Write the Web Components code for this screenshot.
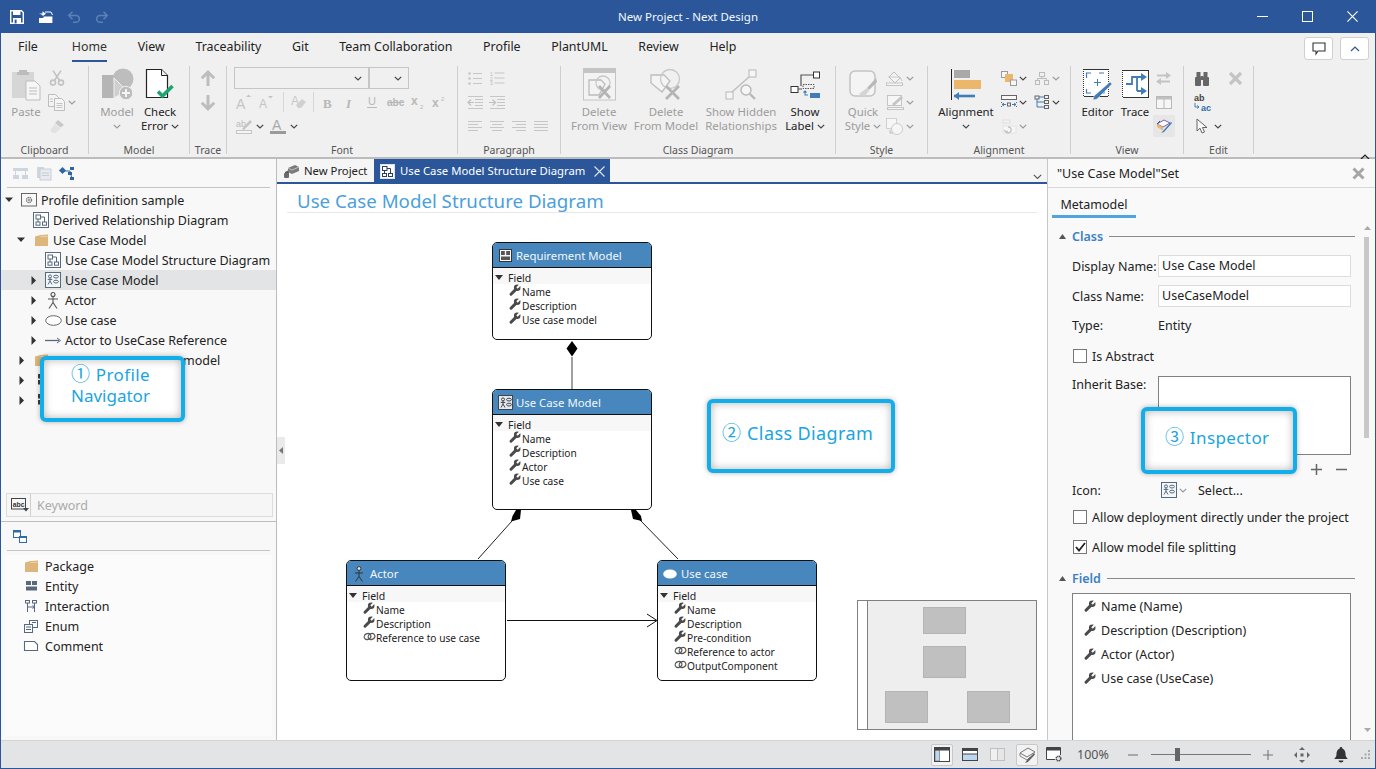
<!DOCTYPE html>
<html lang="en"><head><meta charset="utf-8"><title>New Project - Next Design</title>
<style>
html,body{margin:0;padding:0;background:#fff;overflow:hidden}
body{font:12.5px/1.2 "Noto Sans","Noto Sans CJK JP",sans-serif;color:#222;width:1376px;height:769px}
.num{font-family:"Noto Sans CJK JP",sans-serif;font-size:19px;letter-spacing:0;margin-right:1px}
</style>
<script>
const G='#bdbdbd',D='#56697f',B='#3f7cb8',K='#4a4a4a';
const svgT=(x,y,t,sz,c,extra='')=>`<text x="${x}" y="${y}" font-size="${sz}" fill="${c}" ${extra}>${t}</text>`;
const wrench=c=>`<path d="M2 10.2 6.6 5.6" stroke="${c}" stroke-width="3" stroke-linecap="round"/><circle cx="8.2" cy="3.8" r="3.3" fill="${c}"/><path d="M8 4 11.6.4" stroke="#fff" stroke-width="2"/>`;
const ucm=(bg,c)=>`<rect x=".5" y=".5" width="15" height="15" fill="${bg}" stroke="${c}"/><g fill="none" stroke="${c}"><circle cx="5" cy="4.4" r="1.5"/><path d="M5 6v3M2.7 7.4h4.6M5 9 3 12.5M5 9l2 3.5"/><ellipse cx="11" cy="4.6" rx="2.4" ry="1.4"/><ellipse cx="11" cy="9.6" rx="2.4" ry="1.4"/></g>`;
const diagram=`<rect x=".5" y=".5" width="15" height="15" fill="#fff" stroke="${D}"/><g fill="none" stroke="${D}"><rect x="3" y="3" width="4.5" height="4"/><rect x="3" y="10" width="4" height="3.2"/><rect x="9.5" y="10" width="4" height="3.2"/><path d="M7.5 5h4v5M5 7v3"/></g>`;
const folder=c=>`<path d="M0 2.5 5.5 1 13 .5V12H0z" fill="${c}"/><path d="M5.5 2.4h7" stroke="#ecd5ac"/>`;
const I={
save:[14,14,`<path d="M.7.7h10.8l1.8 1.8v10.8H.7z" fill="none" stroke="#fff" stroke-width="1.4"/><rect x="3" y="1" width="7.4" height="4" fill="#fff"/><rect x="3" y="8" width="8" height="5.4" fill="#fff"/><rect x="4.6" y="9.6" width="2" height="3.8" fill="#2b579a"/>`],
open:[15,14,`<path d="M1 8h4l1-1.5h8.4V13H1z" fill="#fff"/><path d="M8 3.5H4.5V1.2L1 3.8l3.5 2.5V5" fill="#fff" transform="matrix(-1 0 0 1 9 0)"/><path d="M7 2h6l1.500 3" fill="none" stroke="#fff"/>`],
undo:[14,12,`<path d="M2 4.5h7a3.4 3.4 0 0 1 0 6.8H6M5.5.8 1.8 4.5l3.7 3.7" fill="none" stroke="#5c80b8" stroke-width="1.6"/>`],
redo:[14,12,`<path d="M12 4.5H5a3.4 3.4 0 0 0 0 6.8h3M8.5.8l3.7 3.7-3.7 3.7" fill="none" stroke="#5c80b8" stroke-width="1.6"/>`],
min:[11,1,`<rect width="11" height="1" fill="#fff"/>`],
max:[11,11,`<rect x=".5" y=".5" width="10" height="10" fill="none" stroke="#fff"/>`],
close:[11,11,`<path d="M.4.4l10.2 10.2M10.6.4.4 10.6" stroke="#fff" stroke-width="1.1"/>`],
chev:[8,5,`<path d="M.8.8 4 4 7.2.8" fill="none" stroke="#444" stroke-width="1.2"/>`],
chevg:[8,5,`<path d="M.8.8 4 4 7.2.8" fill="none" stroke="#9a9a9a" stroke-width="1.2"/>`],
paste:[30,32,`<rect x="1" y="4" width="22" height="26" rx="1" fill="#d6d6d6"/><path d="M8 4V2h8v2h2v3H6V4z" fill="#bcbcbc"/><path d="M15 13h9l5 5v14H15z" fill="#f6f6f6" stroke="#bdbdbd"/><path d="M18 20h8M18 23h8M18 26h8" stroke="#bdbdbd"/>`],
cut:[16,16,`<g fill="none" stroke="#c2c2c2" stroke-width="1.6"><circle cx="4" cy="12.6" r="2.5"/><circle cx="12" cy="12.6" r="2.5"/><path d="M5.4 10.5 12 .6M10.6 10.5 4 .6"/></g>`],
copy:[18,17,`<path d="M.5.5h7l3 3v9H.5z" fill="#f3f3f3" stroke="#bdbdbd"/><path d="M6.5 4.5h7l3 3v9h-10z" fill="#f5f5f5" stroke="#bdbdbd"/><path d="M8.5 9.5h6M8.5 11.5h6M8.5 13.5h6M2 5h3M2 7.5h3" stroke="#c4c4c4"/>`],
brush:[16,14,`<path d="M9 1l6 5-3.5 2.5L6 4z" fill="#c8c8c8"/><path d="M6 5l5.5 4.5L7 14H3.6L1 11z" fill="#e2e2e2"/>`],
model:[33,32,`<path d="M1 7h12l6 6-6 17H1z" fill="#b5b5b5"/><circle cx="22" cy="11" r="10.5" fill="#bdbdbd"/><path d="M13 10l11 11-6 6-5 3z" fill="#cfcfcf" stroke="#f0f0f0"/><circle cx="25" cy="25" r="6.7" fill="#bcbcbc" stroke="#f0f0f0"/><path d="M25 21v8M21 25h8" stroke="#f4f4f4" stroke-width="2"/>`],
check:[31,32,`<path d="M1.5 1.5h15l6 6v22h-21z" fill="#fff" stroke="#222" stroke-width="1.2"/><path d="M16.5 1.5v6h6" fill="#f0f0f0" stroke="#222"/><path d="M13 23.5l4.5 4.5L27.5 18" fill="none" stroke="#1ba56f" stroke-width="3.6"/>`],
up:[16,17,`<path d="M8 16V2M1.8 8.2 8 2l6.2 6.2" fill="none" stroke="${G}" stroke-width="3"/>`],
down:[16,17,`<path d="M8 1v14M1.8 8.8 8 15l6.2-6.2" fill="none" stroke="${G}" stroke-width="3"/>`],
agrow:[18,16,svgT(1,15,'A',14,'#c4c4c4','font-family="Liberation Sans"')+`<path d="M11 3l2.5-2.5L16 3z" fill="#c4c4c4"/>`],
ashrink:[16,14,svgT(1,13,'A',12,'#c4c4c4','font-family="Liberation Sans"')+`<path d="M10 1h5l-2.5 2.5z" fill="#c4c4c4"/>`],
clear:[16,16,svgT(1,11,'A',12,'#c8c8c8','font-family="Liberation Sans"')+`<path d="M6 11l6-6 4 3-5 6H8z" fill="#d0d0d0"/>`],
bold:[12,13,svgT(1,11.5,'B',13,'#b8b8b8','font-family="Liberation Serif" font-weight="700"')],
ital:[12,13,svgT(2,11.5,'I',13,'#b8b8b8','font-family="Liberation Serif" font-style="italic" font-weight="700"')],
under:[12,14,svgT(2,10,'U',11,'#b8b8b8','font-family="Liberation Sans"')+`<rect x="1" y="12" width="10" height="1" fill="#b8b8b8"/>`],
strike:[17,12,svgT(0,10,'abc',10,'#b8b8b8','font-family="Liberation Sans" font-weight="700"')+`<rect x="0" y="6" width="17" height="1" fill="#b8b8b8"/>`],
sub:[14,14,svgT(0,10,'x',12,'#b8b8b8','font-family="Liberation Sans" font-weight="700"')+svgT(9,14,'2',6,'#b8b8b8','font-family="Liberation Sans"')],
sup:[14,14,svgT(0,12,'x',12,'#b8b8b8','font-family="Liberation Sans" font-weight="700"')+svgT(9,6,'2',6,'#b8b8b8','font-family="Liberation Sans"')],
hilite:[16,16,svgT(0,9,'ab',9,'#bbb','font-family="Liberation Sans"')+`<path d="M6 11 14 2l2 2-8 8z" fill="#c4c4c4"/><rect x=".5" y="12.5" width="15" height="3" fill="#f5f5f5" stroke="#c4c4c4"/>`],
acolor:[16,16,svgT(2,12,'A',14,'#aaa','font-family="Liberation Sans"')+`<rect y="13" width="16" height="3" fill="#9a9a9a"/>`],
bullets:[14,13,`<g fill="#c6c6c6"><circle cx="1.5" cy="1.5" r="1.3"/><circle cx="1.5" cy="6.5" r="1.3"/><circle cx="1.5" cy="11.5" r="1.3"/></g><path d="M5 1.5h9M5 6.5h9M5 11.5h9" stroke="#c6c6c6"/>`],
nums:[15,14,svgT(0,4.5,'1',5,'#bbb','font-family="Liberation Sans"')+svgT(0,9.5,'2',5,'#bbb','font-family="Liberation Sans"')+svgT(0,14,'3',5,'#bbb','font-family="Liberation Sans"')+`<path d="M4.5 2h10M4.5 7h10M4.5 12h10" stroke="#c6c6c6"/>`],
outdent:[16,13,`<path d="M1 .5h15M8 3.5h8M8 6.5h8M8 9.5h8M1 12.5h15" stroke="#c6c6c6"/><path d="M1 6.5h6M4 3.5l-3 3 3 3" fill="none" stroke="#c0c0c0" stroke-width="1.2"/>`],
indent:[16,13,`<path d="M1 .5h15M8 3.5h8M8 6.5h8M8 9.5h8M1 12.5h15" stroke="#c6c6c6"/><path d="M0 6.5h6M3.5 3.5l3 3-3 3" fill="none" stroke="#c0c0c0" stroke-width="1.2"/>`],
al:[14,10,`<path d="M0 .5h14M0 3.5h10M0 6.5h14M0 9.5h10" stroke="#c6c6c6"/>`],
ac:[14,10,`<path d="M0 .5h14M2 3.5h10M0 6.5h14M2 9.5h10" stroke="#c6c6c6"/>`],
ar:[14,10,`<path d="M0 .5h14M4 3.5h10M0 6.5h14M4 9.5h10" stroke="#c6c6c6"/>`],
aj:[14,10,`<path d="M0 .5h14M0 3.5h14M0 6.5h14M0 9.5h14" stroke="#c6c6c6"/>`],
delview:[33,33,`<rect x=".5" y="1" width="32" height="31" fill="#f3f3f3" stroke="#c4c4c4"/><rect x="0" y="0" width="33" height="5" fill="#c4c4c4"/><path d="M6 12h12l4 4-6 11H6z" fill="#f3f3f3" stroke="#bcbcbc" stroke-width="1.3"/><circle cx="20" cy="15" r="7" fill="none" stroke="#c8c8c8" stroke-width="1.3"/><path d="M16 18l11 12M27 18 16 30" stroke="#b4b4b4" stroke-width="2.6"/>`],
delmodel:[32,31,`<path d="M1 6h13l6 6-8 11-11-9z" fill="#f4f4f4" stroke="#bcbcbc" stroke-width="1.3"/><circle cx="20" cy="10" r="9.5" fill="none" stroke="#c8c8c8" stroke-width="1.3"/><path d="M16 17l13 13M29 17 16 30" stroke="#b4b4b4" stroke-width="2.8"/>`],
hidden:[32,31,`<rect x="24" y="1" width="7" height="7" fill="#f6f6f6" stroke="#b8b8b8"/><rect x="1" y="23" width="7" height="7" fill="#f6f6f6" stroke="#b8b8b8"/><path d="M7 23 24 8" stroke="#bcbcbc" stroke-width="1.3"/><circle cx="21" cy="21" r="5" fill="#f6f6f6" stroke="#b8b8b8" stroke-width="1.4"/><path d="M25 25l5 5" stroke="#b8b8b8" stroke-width="2.4"/>`],
label:[30,27,`<path d="M11 15V4h13" fill="none" stroke="#555" stroke-width="1.2"/><rect x="23.5" y="1" width="6" height="6" fill="#fff" stroke="#333"/><rect x="1" y="15.5" width="7" height="6" fill="#fff" stroke="#333"/><path d="M8 18h4" stroke="#555"/><rect x="13" y="13.5" width="11" height="4" fill="none" stroke="#555" stroke-dasharray="1.5 1"/><rect x="20" y="22" width="10" height="5" fill="${B}"/><path d="M15 20v4h3M13.5 21.5 15 20l1.500 1.500" fill="none" stroke="${B}" stroke-width="1.100"/>`],
qstyle:[29,29,`<rect x="1" y="1" width="25" height="25" rx="5" fill="#f4f4f4" stroke="#c2c2c2" stroke-width="1.5"/><path d="M27 8 18 18l2 2 8-8z" fill="#b8b8b8"/><path d="M18 18l2 3-5 6-5-3z" fill="#d4d4d4"/>`],
fill:[18,15,`<path d="M8 1l6 6-5 5-6-6z" fill="#f4f4f4" stroke="#bdbdbd"/><path d="M2 6h12l2 4" fill="none" stroke="#c8c8c8"/><rect x=".5" y="12" width="16" height="2.500" fill="#f5f5f5" stroke="#c4c4c4"/>`],
pen:[17,15,`<rect x=".5" y=".5" width="14" height="10" fill="#f6f6f6" stroke="#c4c4c4"/><path d="M5 9l9-8 2 2-9 8z" fill="#c4c4c4"/><rect x=".5" y="12.500" width="16" height="2" fill="#f5f5f5" stroke="#c4c4c4"/>`],
shape:[18,17,`<rect x=".5" y=".5" width="10" height="10" fill="#f6f6f6" stroke="#d0d0d0"/><circle cx="11" cy="11" r="5.500" fill="#f6f6f6" stroke="#ccc"/><path d="M4 12v3h3" fill="none" stroke="#bbb"/>`],
align:[31,31,`<rect x="0" y="0" width="1" height="31" fill="#222"/><rect x="3" y="1" width="16" height="8" fill="#a9a9a9"/><rect x="3" y="11" width="27" height="9" fill="#ecb76b"/><path d="M3 27h21" stroke="${B}" stroke-width="2.600"/><path d="M8 23l-5 4 5 4z" fill="${B}"/>`],
arr1:[16,15,`<rect x=".5" y=".5" width="6" height="6" fill="#f8f8f8" stroke="#999"/><rect x="4" y="3" width="8" height="8" fill="#ecb76b"/><rect x="9.500" y="9" width="6" height="5.500" fill="#f8f8f8" stroke="#999"/>`],
org:[14,13,`<rect x="4.500" y=".5" width="5" height="4" fill="none" stroke="#bbb"/><rect x=".5" y="8.500" width="4" height="4" fill="none" stroke="#bbb"/><rect x="9.500" y="8.500" width="4" height="4" fill="none" stroke="#bbb"/><path d="M7 4.500v2M2.500 8.500v-2h9v2" fill="none" stroke="#bbb"/>`],
arr2:[17,14,`<rect x=".5" y=".5" width="15" height="4" fill="#f8f8f8" stroke="#666"/><path d="M.5 7v1M.5 11v1M15.500 7v1M15.500 11v1" stroke="#666"/><rect x="6.500" y="8" width="3" height="3" fill="none" stroke="#666"/><path d="M1 9.500h4M11 9.500h4M3 8l-2 1.500L3 11M13 8l2 1.500L13 11" fill="none" stroke="${B}"/>`],
arr3:[16,14,`<rect x="1" y="1" width="4" height="3" fill="none" stroke="#666"/><rect x="10.500" y=".5" width="4" height="3" fill="none" stroke="#666"/><rect x="10.500" y="5.500" width="4" height="3" fill="none" stroke="#666"/><rect x="10.500" y="10.500" width="4" height="3" fill="none" stroke="#666"/><path d="M3 4v8h7M3 7h7M5 2h5" fill="none" stroke="${B}"/>`],
arr4:[15,15,`<rect x="1" y="1" width="7" height="3" fill="#f4f4f4" stroke="#dedede"/><rect x="1" y="7" width="13" height="7" fill="#f6f6f6" stroke="#e4e4e4"/><path d="M6 8a3 3 0 1 1-2 5M2 11l2 2 2-1" fill="none" stroke="#c2c2c2" stroke-width="1.300"/>`],
editor:[29,31,`<rect x=".5" y=".5" width="25" height="27" fill="#fff" stroke="#333"/><path d="M.5 1v27M25.500 1v27" stroke="#fff" stroke-dasharray="1 1"/><path d="M3.500 9V4H8M16 4h5M21 20v4h-4M3.500 20v4H8" fill="none" stroke="${B}" stroke-width="1.200"/><path d="M14.500 10v7M11 13.500h7" stroke="${B}"/><path d="M27 13l2 2-15 15-4 1 1-4z" fill="${B}" stroke="#f0f0f0" stroke-width=".5"/>`],
trace:[27,28,`<rect x=".5" y=".5" width="26" height="27" fill="#fff" stroke="#333"/><path d="M.5 1v27" stroke="#fff" stroke-dasharray="1 1"/><path d="M4 14h6V7h10M15 21V7M15 21h5" fill="none" stroke="${B}" stroke-width="1.800"/><path d="M19 3l6 4-6 4zM19 17l6 4-6 4z" fill="${B}"/>`],
swap:[16,13,`<path d="M1 3.500h10M14 9.500H4" stroke="#c4c4c4" stroke-width="2"/><path d="M10 0l5 3.500L10 7zM5 6 0 9.500 5 13z" fill="#c4c4c4"/>`],
table:[16,13,`<rect x=".5" y=".5" width="15" height="12" fill="#f6f6f6" stroke="#b8b8b8"/><rect x="1" y="1" width="14" height="2.500" fill="#c0c0c0"/><path d="M8 3v9" stroke="#b8b8b8"/>`],
pal:[16,16,`<path d="M1 6l7-4 6 3-7 4z" fill="#fff" stroke="#7a5ea8"/><path d="M1 9l6 3.500V9L1 6z" fill="#ecb76b"/><path d="M7 13l8-9 1 1-8 9-3 1z" fill="${B}"/><path d="M1 6l3-3" stroke="#2b579a"/>`],
binoc:[16,15,`<g fill="#666"><rect x="1" y="6" width="6" height="9" rx="1"/><rect x="9" y="6" width="6" height="9" rx="1"/><rect x="2.500" y="1" width="4" height="6"/><rect x="9.500" y="1" width="4" height="6"/><rect x="6.500" y="5" width="3" height="4"/></g>`],
xg:[15,15,`<path d="M2 2l11 11M13 2 2 13" stroke="#c4c4c4" stroke-width="3.200"/>`],
abac:[17,17,svgT(0,6.500,'ab',9,'#444','font-family="Liberation Sans" font-weight="700"')+svgT(7,16.500,'ac',9,'#2f6da8','font-family="Liberation Sans" font-weight="700"')+`<path d="M1 9v4h4M3.300 11.500 5 13 3.300 14.500" fill="none" stroke="${B}"/>`],
pointer:[12,16,`<path d="M1 1v12l3-2.800 2 4.800 2.500-1L6.500 9.500H11z" fill="#f8f8f8" stroke="#666"/>`],
comment:[14,13,`<path d="M1 1h12v8H6L4 12V9H1z" fill="none" stroke="#333" stroke-width="1.100"/>`],
collapse:[10,6,`<path d="M1 5l4-4 4 4" fill="none" stroke="#2b579a" stroke-width="1.200"/>`],
collapse2:[10,6,`<path d="M1 5l4-4 4 4" fill="none" stroke="#222" stroke-width="1.200"/>`],
tb1:[15,11,`<g fill="#cdd6e0"><rect width="15" height="3"/><rect y="7" width="6" height="4"/><rect x="9" y="7" width="6" height="4"/><rect x="2" y="3" width="1" height="4"/><rect x="12" y="3" width="1" height="4"/></g>`],
tb2:[14,13,`<rect x="0" y="0" width="7" height="11" fill="#cfd6de"/><rect x="3" y="2" width="11" height="11" fill="#e7eaee" stroke="#c8ced6"/><path d="M5 6h7M5 8.500h7" stroke="#c8ced6"/>`],
tb3:[15,13,`<g fill="#2f66a0"><rect x="0" y="1" width="5" height="5" transform="rotate(45 2.500 3.500)"/><rect x="8" y="5" width="4" height="3"/><rect x="10" y="0" width="4" height="3"/><rect x="10" y="10" width="4" height="3"/></g><path d="M3 4h7l2 8" fill="none" stroke="#2f66a0"/>`],
proj:[16,14,`<rect x=".5" y=".5" width="15" height="12.500" fill="#f8f8f8" stroke="#666"/><circle cx="8" cy="7" r="2.500" fill="none" stroke="#777" stroke-width="1.400" stroke-dasharray="1.400 .6"/><circle cx="8" cy="7" r=".9" fill="#777"/>`],
diagram:[16,16,diagram],
ucm:[16,16,ucm('#f4f6f8',D)],
folder:[13,12,folder('#dcb67a')],
actor:[14,17,`<g fill="none" stroke="#555" stroke-width="1.100"><circle cx="7" cy="2.500" r="2"/><path d="M7 4.500v6M2 7h10M7 10.500 3 16.500M7 10.500l4 6"/></g>`],
usecase:[17,11,`<ellipse cx="8.500" cy="5.500" rx="7.800" ry="4.800" fill="#fff" stroke="#666"/>`],
refarrow:[16,7,`<path d="M0 3.500h14" stroke="${D}" stroke-width="1.300"/><path d="M12 1l3.500 2.500L12 6" fill="none" stroke="${D}"/>`],
ent:[7,12,`<rect y="0" width="7" height="4.500" fill="#3c3c3c"/><rect y="6" width="7" height="4.500" fill="#3c3c3c"/>`],
abc:[18,14,`<rect x=".5" y=".5" width="14" height="10.500" fill="#f8f8f8" stroke="#444"/>`+svgT(1.800,8.500,'abc',6.800,'#333','font-family="Liberation Sans" font-weight="700"')+`<path d="M12 10h6l-3 3.500z" fill="#444"/>`],
pal0:[14,13,`<rect x=".5" y=".5" width="7" height="7" fill="#fff" stroke="#2f6da8"/><rect x="0" y="0" width="8" height="2.500" fill="#2f6da8"/><rect x="6.500" y="6.500" width="7" height="6" fill="#fff" stroke="#2f6da8"/><rect x="6" y="6" width="8" height="2" fill="#2f6da8"/>`],
pkg:[13,12,folder('#dcb67a')],
entity:[11,10,`<rect width="5" height="4" fill="${D}"/><rect x="6" width="5" height="4" fill="${D}"/><rect y="5.500" width="11" height="4" fill="${D}"/>`],
inter:[12,12,`<g fill="none" stroke="${D}"><rect x=".5" y=".5" width="4" height="2.500"/><rect x="7.500" y=".5" width="4" height="2.500"/><path d="M2.500 3v9M9.500 3v9M2.500 7h7M7.500 5.500l2 1.500-2 1.500"/></g>`],
enumi:[14,13,`<g fill="#fafafa" stroke="${D}"><rect x="5.500" y=".5" width="8" height="7"/><rect x=".5" y="4.500" width="8" height="8"/></g><path d="M2 7h5M2 9.500h5M8 2.500h4" stroke="${D}"/>`],
note:[14,10,`<path d="M.5.5h10l3 3v6H.5z" fill="#fff" stroke="${D}" stroke-width="1.100"/>`],
wrench:[12,12,wrench(K)],
link:[13,9,`<g fill="none" stroke="#555" stroke-width="1.200"><ellipse cx="4.500" cy="4.500" rx="3.400" ry="2.900" transform="rotate(-25 4.500 4.500)"/><ellipse cx="8.500" cy="4.500" rx="3.400" ry="2.900" transform="rotate(-25 8.500 4.500)"/></g>`],
hEntity:[13,13,`<rect x=".5" y=".5" width="12" height="12" fill="#f8f8f8" stroke="#333"/><rect x="2" y="2" width="3.800" height="4" fill="#555"/><rect x="7.200" y="2" width="3.800" height="4" fill="#555"/><rect x="2" y="7.500" width="9" height="3.500" fill="#555"/>`],
hUcm:[15,15,ucm('#e4e9ef','#444').replace('width="15" height="15"','width="14" height="14"')],
hActor:[12,16,`<g fill="none" stroke="#333" stroke-width="1"><circle cx="6" cy="2.500" r="1.900" fill="#e8e8e8"/><path d="M6 4.500v6M2 7h8M6 10.500l-3.500 5M6 10.500l3.500 5"/></g>`],
hUse:[14,10,`<ellipse cx="7" cy="5" rx="6.800" ry="4.500" fill="#fff"/>`],
sv1:[16,15,`<rect x=".5" y=".5" width="15" height="14" fill="#fff" stroke="#444"/><rect x="1" y="1" width="14" height="2.500" fill="#444"/><rect x="1" y="3.500" width="4.500" height="10.500" fill="#bcd7f2" stroke="#444" stroke-width=".5"/>`],
sv2:[16,13,`<rect x=".5" y=".5" width="15" height="12" fill="#fff" stroke="#444"/><rect x="1" y="1" width="14" height="2" fill="#444"/><rect x="1" y="6" width="14" height="6" fill="#bcd7f2"/><path d="M1 6h14" stroke="#444"/>`],
sv3:[15,13,`<rect x=".5" y=".5" width="14" height="12" fill="#f0f0f0" stroke="#c0c0c0"/><rect x="8" y="1" width="6" height="11" fill="#e6e6e6"/><path d="M7.500 1v11" stroke="#c0c0c0"/>`],
sv4:[17,17,`<path d="M1 7l8-5 7 4-8 5z" fill="#f4f4f4" stroke="#777"/><path d="M1 7v3l7 4 3-3" fill="none" stroke="#888"/><path d="M8 14l7-7 1 1.500L9 16l-3 1z" fill="#666"/>`],
sv5:[16,15,`<path d="M14.500 8V.5H.5v12H9" fill="#fff" stroke="#444"/><rect x="1" y="1" width="13" height="2.500" fill="#444"/><circle cx="12.500" cy="11.500" r="2.300" fill="none" stroke="#444" stroke-width="1.500" stroke-dasharray="1.200 .5"/>`],
move:[16,16,`<g fill="#666"><path d="M8 0l3 3H5zM8 16l-3-3h6zM0 8l3-3v6zM16 8l-3 3V5z"/><rect x="6.500" y="6.500" width="3" height="3"/></g>`],
bell:[14,16,`<path d="M7 0a1.300 1.300 0 0 1 1.300 1.400C11 2.300 11.500 5 11.500 7c0 2.500 1 3.600 2 4.500V12H.5v-.5c1-.9 2-2 2-4.500 0-2 .5-4.700 3.200-5.600A1.300 1.300 0 0 1 7 0z" fill="#333"/><path d="M4.500 13.500h5a2.500 2 0 0 1-5 0z" fill="#333"/>`],
grip:[9,9,`<g fill="#a8a8a8"><rect x="7" y="0" width="2" height="2"/><rect x="3.500" y="3.500" width="2" height="2"/><rect x="7" y="3.500" width="2" height="2"/><rect x="0" y="7" width="2" height="2"/><rect x="3.500" y="7" width="2" height="2"/><rect x="7" y="7" width="2" height="2"/></g>`],
tabproj:[15,13,`<path d="M1 7l4-2v6l-4 1z" fill="#5c5c5c"/><path d="M4 3l7-3 4 2v4l-7 3-4-2z" fill="#7a7a7a"/><path d="M4 3l4 2 7-3" fill="none" stroke="#f0f0f0" stroke-width=".6"/><rect x="0" y="8" width="5" height="5" rx="1" fill="#6a6a6a"/>`],
tabdiag:[15,15,`<rect x=".5" y=".5" width="14" height="14" fill="#fff" stroke="#dbe3ee"/><g fill="none" stroke="#2b3f5c"><rect x="2.500" y="2.500" width="4.500" height="4"/><rect x="2.500" y="9.500" width="4" height="3"/><rect x="8.500" y="9.500" width="4" height="3"/><path d="M7 4.500h3.500v5M4.500 6.500v3"/></g>`],
tabx:[11,11,`<path d="M.5.5l10 10M10.500.5l-10 10" stroke="#dce6f2" stroke-width="1.100"/>`],
tabdd:[9,6,`<path d="M.8.8 4.500 4.500 8.200.8" fill="none" stroke="#555" stroke-width="1.100"/>`],
ptri:[7,5,`<path d="M0 5 3.500 0 7 5z" fill="#555"/>`],
plus:[11,11,`<path d="M5.500 0v11M0 5.500h11" stroke="#666" stroke-width="1.500"/>`],
minus:[11,11,`<path d="M0 5.500h11" stroke="#666" stroke-width="1.500"/>`],
plus2:[10,10,`<path d="M5 0v10M0 5h10" stroke="#777" stroke-width="1.100"/>`],
minus2:[10,10,`<path d="M0 5h10" stroke="#777" stroke-width="1.100"/>`],
xh:[13,13,`<path d="M1.500 1.500l10 10M11.500 1.500l-10 10" stroke="#a6a6a6" stroke-width="3"/>`],
chk:[11,10,`<path d="M1 5l3 3.500L10 1" fill="none" stroke="#222" stroke-width="1.800"/>`],
};
const def=(tag,css,html)=>customElements.define(tag,class extends HTMLElement{
  connectedCallback(){ if(this.shadowRoot) return;
    const r=this.attachShadow({mode:'open'});
    const a=n=>this.getAttribute(n);
    r.innerHTML=`<style>${css}</style>`+(typeof html==='function'?html(a,this):html);
  }});
const ic=n=>`<nd-icon name="${n}"></nd-icon>`;
customElements.define('nd-icon',class extends HTMLElement{
  connectedCallback(){ if(this.shadowRoot) return;
    const [w,h,s]=I[this.getAttribute('name')];
    this.attachShadow({mode:'open'}).innerHTML=`<style>:host{display:inline-flex;flex:none;line-height:0}svg{overflow:visible}</style><svg xmlns="http://www.w3.org/2000/svg" width="${w}" height="${h}" viewBox="0 0 ${w} ${h}">${s}</svg>`;
  }});
def('nd-app',`:host{display:flex;flex-direction:column;width:1376px;height:769px;position:relative;box-sizing:border-box;border:solid #2b579a;border-width:0 1px 1px 1px;overflow:hidden;background:#f0f0f0}`,`<slot></slot>`);
def('nd-titlebar',`:host{display:flex;align-items:center;height:33px;background:#2b579a;margin:0 -1px;flex:none;position:relative;color:#f4f7fb}
.q{display:flex;align-items:center;padding-left:10px;gap:14px;width:200px}
.t{position:absolute;left:0;right:0;text-align:center;font-size:11.500px;padding-top:1px}
.w{margin-left:auto;display:flex;align-items:center;gap:34px;padding-right:18px}`,
`<div class="q">${ic('save')}${ic('open')}${ic('undo')}${ic('redo')}</div><div class="t">New Project - Next Design</div><div class="w">${ic('min')}${ic('max')}${ic('close')}</div>`);
def('rb-tabs',`:host{display:flex;align-items:flex-start;height:29px;flex:none;padding-left:17px;box-sizing:border-box;position:relative}`,`<slot></slot>`);
def('rb-tab',`:host{display:block;height:29px;box-sizing:border-box;padding-top:7px;margin-right:30.600px;font-size:12.400px;color:#222;white-space:nowrap}
:host([first]){margin-right:34px}
:host([on]){box-shadow:inset 0 -2px 0 #2b579a;color:#333}`,`<slot></slot>`);
def('rb-corner',`:host{display:flex;gap:7px;position:absolute;right:6px;top:4px}
span{width:27px;height:21px;display:flex;align-items:center;justify-content:center;background:#fff;border:1px solid #d0d0d0;border-radius:3px}`,
`<span>${ic('comment')}</span><span>${ic('collapse')}</span>`);
def('rb-groups',`:host{display:flex;box-sizing:border-box;padding-top:4px;flex:none;border-bottom:2px solid #bcbcbc;position:relative;height:97px}
.c{position:absolute;right:5px;top:86px}`,`<slot></slot><div class="c">${ic('collapse2')}</div>`);
def('rb-group',`:host{display:flex;flex-direction:column;height:88px;box-sizing:border-box;border-right:1px solid #cfcfcf;flex:none}
.b{height:72px;display:flex;flex:none}
.l{font-size:10.500px;line-height:14px;margin-top:5px;text-align:center;color:#555;white-space:nowrap}`,
a=>`<div class="b" style="padding-left:${a('pad')||0}px"><slot></slot></div><div class="l">${a('label')}</div>`);
def('rb-big',`:host{display:flex;flex-direction:column;align-items:center;flex:none;color:#9c9c9c;white-space:nowrap;font-size:11.400px;line-height:14px}
:host([en]){color:#222}
.i{height:36px;display:flex;align-items:center;justify-content:center;margin-bottom:3px;flex:none}
.n{display:flex;align-items:center;gap:3px;height:14px}`,
(a)=>{const c=a('en')!==null?'chev':'chevg';const ch=a('chev')!==null?ic(c):'';
 return `<div class="i">${ic(a('icon'))}</div><div class="n">${a('l1')}</div><div class="n">${a('l2')||''}${ch}</div>`});
def('rb-col',`:host{display:flex;flex-direction:column;flex:none}`,`<slot></slot>`);
def('rb-row',`:host{display:flex;align-items:center;height:24px;flex:none}`,`<slot></slot>`);
def('rb-cell',`:host{display:flex;align-items:center;justify-content:center;flex:none;height:24px}`,`<slot></slot>`);
def('rb-small',`:host{display:flex;align-items:center;height:24px;flex:none}
.s{display:flex;justify-content:center;flex:none}.c{margin-left:2px;display:flex}`,
a=>`<span class="s" style="width:${a('w')||18}px">${ic(a('icon'))}</span>${a('chev')?`<span class="c">${ic(a('chev'))}</span>`:''}`);
def('rb-combo',`:host{display:block;height:22px;box-sizing:border-box;border:1px solid #c6c6c6;flex:none;position:relative}
.c{position:absolute;right:6px;top:8px;display:flex}`,`<span class="c">${ic('chev')}</span>`);
def('rb-vsep',`:host{display:block;width:1px;height:20px;background:#d6d6d6;flex:none}`,``);
def('nd-main',`:host{display:flex;flex:1;min-height:0;background:#fff}`,`<slot></slot>`);
def('nd-left',`:host{display:flex;flex-direction:column;width:276px;box-sizing:border-box;border-right:1px solid #bdbdbd;background:#f8f8f8;flex:none}`,`<slot></slot>`);
def('nd-toolbar',`:host{display:flex;align-items:center;box-sizing:border-box;margin:0 6px;padding-left:6px;gap:9px;border-bottom:1px solid #c4c4c4;flex:none}`,`<slot></slot>`);
def('nd-tree',`:host{display:block;flex:1;min-height:0;padding-top:2px}`,`<slot></slot>`);
def('nd-row',`:host{display:flex;align-items:center;height:20px;box-sizing:border-box;color:#222;white-space:nowrap}
:host([sel]){background:#e3e4e6}
.e{width:18px;height:20px;flex:none;display:flex;align-items:center;padding-left:2px;box-sizing:border-box}
.i{width:16px;display:flex;justify-content:center;flex:none}.t{margin-left:4px}`,
(a)=>{const d=+a('d')||0;const ex=a('e');
 const tri=ex==='o'?`<svg width="9" height="6"><path d="M0 .5h8L4 5z" fill="#333"/></svg>`:ex==='c'?`<svg width="8" height="9"><path d="M2.500 0l4.500 4.500-4.500 4.500z" fill="#333"/></svg>`:'';
 return `<div style="width:${2+12*d}px;flex:none"></div><div class="e">${tri}</div><div class="i">${ic(a('icon'))}</div><div class="t"><slot></slot></div>`});
def('nd-search',`:host{display:flex;align-items:center;margin:0 3px 0 5px;height:24px;box-sizing:border-box;border:1px solid #dcdcdc;background:#f6f6f6;flex:none;color:#aaa}
.i{width:24px;display:flex;padding-left:4px;box-sizing:border-box;height:100%;align-items:center;border-right:1px solid #cfcfcf}
.t{padding-left:6px}`,`<div class="i">${ic('abc')}</div><div class="t"><slot></slot></div>`);
def('nd-hline',`:host{display:block;height:1px;background:#bdbdbd;flex:none}`,``);
def('nd-palette',`:host{display:block;margin:4px;background:#fbfbfb;flex:none;height:180px;padding-top:1px}`,`<slot></slot>`);
def('nd-pal',`:host{display:flex;align-items:center;height:20px;padding-left:16px;color:#222}
.i{width:20px;flex:none;display:flex;justify-content:center}`,a=>`<div class="i">${ic(a('icon'))}</div><div style="margin-left:4px"><slot></slot></div>`);
def('nd-center',`:host{display:flex;flex-direction:column;width:770px;flex:none;background:#fff;border-right:1px solid #c8c8c8;position:relative}`,`<slot></slot>`);
def('nd-tabbar',`:host{display:flex;align-items:flex-end;height:25px;box-sizing:border-box;border-bottom:2px solid #2b579a;background:#f5f5f5;flex:none;position:relative}
.d{position:absolute;right:5px;top:9px}`,`<slot></slot><span class="d">${ic('tabdd')}</span>`);
def('nd-tab',`:host{display:flex;align-items:center;height:23px;gap:5px;box-sizing:border-box;white-space:nowrap;flex:none;padding:1px 0 0 7px;margin-right:1px;width:96px;background:#f5f5f5;color:#222;font-size:11.300px}
:host([on]){background:#2b579a;color:#fff;width:236px;padding-left:6px}
.x{margin-left:4px;display:flex}`,a=>`${ic(a('icon'))}<span><slot></slot></span>${a('on')!==null?`<span class="x">${ic('tabx')}</span>`:''}`);
def('nd-canvas',`:host{display:block;position:relative;flex:1;min-height:0;background:#fff;overflow:hidden}
.t{margin:5px 10px 0 10px;padding-left:10px;height:23px;border-bottom:1px solid #e8e8e8;font-size:18.700px;line-height:24px;color:#4b9fdb;white-space:nowrap}`,a=>`<div class="t">${a('title')}</div><slot></slot>`);
def('nd-class',`:host{position:absolute;display:flex;flex-direction:column;width:160px;box-sizing:border-box;border:1px solid #111;border-radius:5px;background:#fff;overflow:hidden;line-height:14px;color:#222}
.h{height:25px;background:#4787bd;border-bottom:1px solid #111;display:flex;align-items:center;color:#f2f7fb;font-size:11.350px;white-space:nowrap;flex:none;padding-top:1px;box-sizing:border-box}
.hi{width:23px;display:flex;justify-content:center;padding-left:1px;box-sizing:border-box;flex:none}
.f{height:16px;background:#f7f7f7;display:flex;align-items:center;flex:none;padding-top:3px;margin-bottom:1px;box-sizing:border-box;line-height:12px;font-size:10.500px}
.f svg{margin:0 5px 0 2px}`,
a=>`<div class="h"><span class="hi">${ic(a('icon'))}</span><span>${a('name')}</span></div><div class="f"><svg width="8" height="5"><path d="M0 0h8L4 5z" fill="#333"/></svg><span>Field</span></div><slot></slot>`);
def('nd-field',`:host{display:flex;align-items:center;height:14px;padding-left:15px;white-space:nowrap;font-size:10.200px}
.i{width:14px;flex:none;display:flex;justify-content:center;position:relative;top:-2px}`,a=>`<span class="i">${ic(a('icon'))}</span><span><slot></slot></span>`);
def('nd-minimap',`:host{position:absolute;display:block;left:580px;top:416px;width:180px;height:130px;box-sizing:border-box;border:1px solid #808080;background:#fff;overflow:hidden}
.v{position:absolute;left:9px;top:0;right:0;bottom:0;background:#eee;border-left:1px solid #808080}
i{position:absolute;background:#c0c0c0;border:1px solid #b4b4b4;box-sizing:border-box;width:43px}`,
`<div class="v"></div><i style="left:65px;top:6px;height:27px"></i><i style="left:65px;top:45px;height:32px"></i><i style="left:27px;top:90px;height:32px"></i><i style="left:109px;top:90px;height:32px"></i>`);
def('nd-splitter',`:host{position:absolute;left:0;top:253px;width:8px;height:27px;background:#eaeaea;display:flex;align-items:center;justify-content:center}`,`<svg width="4" height="7"><path d="M4 0v7L0 3.500z" fill="#777"/></svg>`);
def('nd-right',`:host{display:flex;flex-direction:column;flex:1;min-width:0;background:#f9f9f9;position:relative;overflow:hidden}`,`<slot></slot>`);
def('nd-rhead',`:host{display:flex;align-items:center;height:28px;padding:0 10px 0 9px;border-bottom:1px solid #d8d8d8;flex:none;white-space:nowrap}.x{margin-left:auto;display:flex}`,`<span><slot></slot></span><span class="x">${ic('xh')}</span>`);
def('nd-rtab',`:host{display:flex;align-items:flex-start;justify-content:center;width:84px;height:30px;box-sizing:border-box;margin-left:4px;padding-top:9px;border-bottom:3px solid #4ea6dc;flex:none}`,`<slot></slot>`);
def('nd-sec',`:host{display:flex;align-items:center;height:20px;flex:none;padding-left:11px;padding-right:20px;color:#3b7fc4;font-weight:600;font-size:12.5px}
.l{flex:1;height:1px;background:#8a8a8a;margin-left:6px}.t{width:10px;display:flex;margin-right:3px}`,`<span class="t">${ic('ptri')}</span><span><slot></slot></span><span class="l"></span>`);
def('nd-frow',`:host{display:flex;align-items:center;height:22px;padding-left:24px;flex:none;white-space:nowrap}
.l{width:86px;flex:none}`,a=>`${a('label')?`<span class="l">${a('label')}</span>`:''}<slot></slot>`);
def('nd-input',`:host{display:flex;align-items:center;width:193px;height:22px;box-sizing:border-box;border:1px solid #ddd;background:#fff;padding:0 0 2px 3px;flex:none}`,`<slot></slot>`);
def('nd-check',`:host{display:flex;align-items:center;height:22px;padding-left:25px;gap:5px;flex:none;white-space:nowrap}
.b{width:14px;height:14px;box-sizing:border-box;border:1px solid #777;background:#fff;display:flex;align-items:center;justify-content:center}`,a=>`<span class="b">${a('on')!==null?ic('chk'):''}</span><span><slot></slot></span>`);
def('nd-listbox',`:host{display:block;box-sizing:border-box;border:1px solid #808080;background:#fff;flex:none}`,`<slot></slot>`);
def('nd-litem',`:host{display:flex;align-items:center;height:24px;padding-left:11px;gap:5px;white-space:nowrap}`,a=>`${ic('wrench')}<span><slot></slot></span>`);
def('nd-scroll',`:host{position:absolute;right:5px;top:64px;width:6px;height:520px;display:block}
.u,.d{position:absolute;left:0;line-height:0}.u{top:3px}.d{bottom:11px}
.th{position:absolute;left:0;top:14px;height:201px;width:5px;background:#c8c8c8}`,
`<span class="u"><svg width="7" height="4"><path d="M0 4 3.500 0 7 4z" fill="#aaa"/></svg></span><div class="th"></div><span class="d"><svg width="7" height="4"><path d="M0 0h7L3.500 4z" fill="#aaa"/></svg></span>`);
def('nd-status',`:host{display:flex;align-items:center;height:28px;background:#e3e4e6;border-top:1px solid #d4d4d4;box-sizing:border-box;padding-right:3px;flex:none;color:#555}`,`<slot></slot>`);
def('st-btn',`:host{display:flex;align-items:center;justify-content:center;width:22px;height:22px;box-sizing:border-box;flex:none}
:host([on]){background:#f2f2f2;border:1px solid #c8c8c8;border-radius:2px}`,a=>ic(a('icon')));
def('st-slider',`:host{display:block;width:100px;height:13px;position:relative;flex:none}
.l{position:absolute;left:0;right:0;top:6px;height:1px;background:#777}.t{position:absolute;left:24px;top:0;width:5px;height:13px;background:#666}`,`<div class="l"></div><div class="t"></div>`);
def('nd-connectors',`:host{position:absolute;left:0;top:0;display:block;line-height:0}`,
`<svg width="770" height="556" viewBox="277 184 770 556" xmlns="http://www.w3.org/2000/svg">
<path d="M572 357V389" stroke="#777" stroke-width="1.400"/><path d="M572 341l5.500 7.500-5.500 8-5.500-8z" fill="#000"/>
<path d="M478 559 512 521" stroke="#222" fill="none"/><path d="M516 510H521L520 519 511 521.500 512.500 516z" fill="#000"/>
<path d="M678 559 640 520" stroke="#222" fill="none"/><path d="M631 510H636L641 516 642 521 633 519z" fill="#000"/>
<path d="M507 620.500H656" stroke="#111"/><path d="M647 614l10 6.500-10 6.500" fill="none" stroke="#111"/>
</svg>`);
def('nd-callout',`:host{position:absolute;display:block;box-sizing:border-box;background:#fff;border:4px solid #11aeea;border-radius:6px;box-shadow:0 0 5px rgba(0,0,0,.3),inset 0 0 8px rgba(0,0,0,.3);color:#18a5e0;line-height:21px;letter-spacing:.4px;white-space:pre}`,`<slot></slot>`);
</script></head>
<body>
<nd-app>
<nd-titlebar></nd-titlebar>
<rb-tabs><rb-tab first>File</rb-tab><rb-tab on>Home</rb-tab><rb-tab>View</rb-tab><rb-tab>Traceability</rb-tab><rb-tab>Git</rb-tab><rb-tab>Team Collaboration</rb-tab><rb-tab>Profile</rb-tab><rb-tab>PlantUML</rb-tab><rb-tab>Review</rb-tab><rb-tab>Help</rb-tab><rb-corner></rb-corner></rb-tabs>
<rb-groups>
 <rb-group label="Clipboard" style="width:88px" pad="3"><rb-big icon="paste" l1="Paste" style="width:44px"></rb-big><rb-col><rb-small icon="cut"></rb-small><rb-small icon="copy" chev="chevg"></rb-small><rb-small icon="brush"></rb-small></rb-col></rb-group>
 <rb-group label="Model" style="width:101px" pad="2"><rb-big icon="model" l1="Model" l2=" " chev style="width:52px"></rb-big><rb-big en icon="check" l1="Check" l2="Error" chev style="width:34px"></rb-big></rb-group>
 <rb-group label="Trace" style="width:37px"><rb-col style="width:36px"><rb-cell>
 <nd-icon name="up"></nd-icon></rb-cell><rb-cell><nd-icon name="down"></nd-icon></rb-cell></rb-col></rb-group>
 <rb-group label="Font" style="width:231px" pad="7"><rb-col>
  <rb-row><rb-combo style="width:135px"></rb-combo><rb-combo style="width:40px"></rb-combo></rb-row>
  <rb-row><rb-small icon="agrow" w="20"></rb-small><rb-small icon="ashrink" w="24"></rb-small><rb-cell style="width:10px"><rb-vsep></rb-vsep></rb-cell><rb-small icon="clear" w="20"></rb-small><rb-cell style="width:10px"><rb-vsep></rb-vsep></rb-cell><rb-small icon="bold" w="20"></rb-small><rb-small icon="ital" w="24"></rb-small><rb-small icon="under" w="20"></rb-small><rb-small icon="strike" w="26"></rb-small><rb-small icon="sub" w="20"></rb-small><rb-small icon="sup" w="22"></rb-small></rb-row>
  <rb-row><rb-small icon="hilite" w="20" chev="chev"></rb-small><rb-cell style="width:4px"></rb-cell><rb-small icon="acolor" w="20" chev="chev"></rb-small></rb-row>
 </rb-col></rb-group>
 <rb-group label="Paragraph" style="width:103px" pad="6"><rb-col>
  <rb-row><rb-small icon="bullets" w="22"></rb-small><rb-small icon="nums" w="22"></rb-small></rb-row>
  <rb-row><rb-small icon="outdent" w="22"></rb-small><rb-small icon="indent" w="22"></rb-small></rb-row>
  <rb-row><rb-small icon="al" w="22"></rb-small><rb-small icon="ac" w="22"></rb-small><rb-small icon="ar" w="22"></rb-small><rb-small icon="aj" w="22"></rb-small></rb-row>
 </rb-col></rb-group>
 <rb-group label="Class Diagram" style="width:275px" pad="7"><rb-big icon="delview" l1="Delete" l2="From View" style="width:62px"></rb-big><rb-big icon="delmodel" l1="Delete" l2="From Model" style="width:72px"></rb-big><rb-big icon="hidden" l1="Show Hidden" l2="Relationships" style="width:78px"></rb-big><rb-big en icon="label" l1="Show" l2="Label" chev style="width:50px"></rb-big></rb-group>
 <rb-group label="Style" style="width:92px" pad="4"><rb-big icon="qstyle" l1="Quick" l2="Style" chev style="width:46px"></rb-big><rb-col><rb-small icon="fill" chev="chevg"></rb-small><rb-small icon="pen" chev="chevg"></rb-small><rb-small icon="shape" chev="chevg"></rb-small></rb-col></rb-group>
 <rb-group label="Alignment" style="width:143px" pad="3"><rb-big en icon="align" l1="Alignment" l2=" " chev style="width:70px"></rb-big><rb-col style="width:33px"><rb-small icon="arr1" w="16" chev="chev"></rb-small><rb-small icon="arr2" w="16" chev="chev"></rb-small><rb-small icon="arr4" w="16" chev="chevg"></rb-small></rb-col><rb-col><rb-small icon="org" w="16" chev="chevg"></rb-small><rb-small icon="arr3" w="16" chev="chev"></rb-small></rb-col></rb-group>
 <rb-group label="View" style="width:113px" pad="5"><rb-big en icon="editor" l1="Editor" style="width:43px"></rb-big><rb-big en icon="trace" l1="Trace" style="width:32px"></rb-big><rb-col style="width:26px;align-items:center"><rb-cell><nd-icon name="swap"></nd-icon></rb-cell><rb-cell><nd-icon name="table"></nd-icon></rb-cell><rb-cell style="background:#e6e6e6;width:22px;height:22px;margin-top:1px;border-radius:2px"><nd-icon name="pal"></nd-icon></rb-cell></rb-col></rb-group>
 <rb-group label="Edit" style="width:70px" pad="8"><rb-col style="width:33px"><rb-small icon="binoc" w="20"></rb-small><rb-small icon="abac" w="20"></rb-small><rb-small icon="pointer" w="20" chev="chev"></rb-small></rb-col><rb-col><rb-small icon="xg" w="20"></rb-small></rb-col></rb-group>
</rb-groups>
<nd-main>
 <nd-left>
  <nd-toolbar style="height:29px"><nd-icon name="tb1"></nd-icon><nd-icon name="tb2"></nd-icon><nd-icon name="tb3"></nd-icon></nd-toolbar>
  <nd-tree>
   <nd-row d="0" e="o" icon="proj">Profile definition sample</nd-row>
   <nd-row d="1" icon="diagram">Derived Relationship Diagram</nd-row>
   <nd-row d="1" e="o" icon="folder">Use Case Model</nd-row>
   <nd-row d="2" icon="diagram">Use Case Model Structure Diagram</nd-row>
   <nd-row d="2" e="c" icon="ucm" sel>Use Case Model</nd-row>
   <nd-row d="2" e="c" icon="actor">Actor</nd-row>
   <nd-row d="2" e="c" icon="usecase">Use case</nd-row>
   <nd-row d="2" e="c" icon="refarrow">Actor to UseCase Reference</nd-row>
   <nd-row d="1" e="c" icon="folder"><span style="margin-left:130px">model</span></nd-row>
   <nd-row d="1" e="c" icon="ent"></nd-row>
   <nd-row d="1" e="c" icon="ent"></nd-row>
  </nd-tree>
  <nd-search>Keyword</nd-search>
  <nd-hline style="margin-top:4px"></nd-hline>
  <nd-toolbar style="height:29px"><nd-icon name="pal0"></nd-icon></nd-toolbar>
  <nd-palette>
   <nd-pal icon="pkg">Package</nd-pal><nd-pal icon="entity">Entity</nd-pal><nd-pal icon="inter">Interaction</nd-pal><nd-pal icon="enumi">Enum</nd-pal><nd-pal icon="note">Comment</nd-pal>
  </nd-palette>
 </nd-left>
 <nd-center>
  <nd-tabbar><nd-tab icon="tabproj">New Project</nd-tab><nd-tab on icon="tabdiag">Use Case Model Structure Diagram</nd-tab></nd-tabbar>
  <nd-canvas title="Use Case Model Structure Diagram">
   <nd-connectors></nd-connectors>
   <nd-class name="Requirement Model" icon="hEntity" style="left:215px;top:58px;height:98px"><nd-field icon="wrench">Name</nd-field><nd-field icon="wrench">Description</nd-field><nd-field icon="wrench">Use case model</nd-field></nd-class>
   <nd-class name="Use Case Model" icon="hUcm" style="left:215px;top:205px;height:121px"><nd-field icon="wrench">Name</nd-field><nd-field icon="wrench">Description</nd-field><nd-field icon="wrench">Actor</nd-field><nd-field icon="wrench">Use case</nd-field></nd-class>
   <nd-class name="Actor" icon="hActor" style="left:69px;top:376px;height:121px"><nd-field icon="wrench">Name</nd-field><nd-field icon="wrench">Description</nd-field><nd-field icon="link">Reference to use case</nd-field></nd-class>
   <nd-class name="Use case" icon="hUse" style="left:380px;top:376px;height:121px"><nd-field icon="wrench">Name</nd-field><nd-field icon="wrench">Description</nd-field><nd-field icon="wrench">Pre-condition</nd-field><nd-field icon="link">Reference to actor</nd-field><nd-field icon="link">OutputComponent</nd-field></nd-class>
   <nd-minimap></nd-minimap>
   <nd-splitter></nd-splitter>
  </nd-canvas>
 </nd-center>
 <nd-right>
  <nd-rhead>"Use Case Model"Set</nd-rhead>
  <nd-rtab>Metamodel</nd-rtab>
  <nd-sec style="margin-top:8px">Class</nd-sec>
  <nd-frow label="Display Name:" style="margin-top:9px"><nd-input>Use Case Model</nd-input></nd-frow>
  <nd-frow label="Class Name:" style="margin-top:8px"><nd-input>UseCaseModel</nd-input></nd-frow>
  <nd-frow label="Type:" style="margin-top:7px">Entity</nd-frow>
  <nd-check style="margin-top:9px">Is Abstract</nd-check>
  <nd-frow label="Inherit Base:" style="height:79px;align-items:flex-start;margin-top:9px;line-height:17px"><nd-listbox style="width:193px;height:79px"></nd-listbox></nd-frow>
  <nd-frow style="margin-top:3px;height:22px;padding-left:263px;gap:14px"><nd-icon name="plus"></nd-icon><nd-icon name="minus"></nd-icon></nd-frow>
  <nd-frow label="Icon:" style="height:20px"><span style="width:3px"></span><nd-icon name="ucm"></nd-icon><span style="width:2px"></span><nd-icon name="chevg"></nd-icon><span style="width:11px"></span>Select...</nd-frow>
  <nd-check style="margin-top:6px">Allow deployment directly under the project</nd-check>
  <nd-check on style="margin-top:8px">Allow model file splitting</nd-check>
  <nd-sec style="margin-top:10px">Field</nd-sec>
  <nd-frow style="margin-top:5px;height:auto"><nd-listbox style="width:279px;height:160px"><nd-litem>Name (Name)</nd-litem><nd-litem>Description (Description)</nd-litem><nd-litem>Actor (Actor)</nd-litem><nd-litem>Use case (UseCase)</nd-litem></nd-listbox></nd-frow>
  <nd-scroll></nd-scroll>
 </nd-right>
</nd-main>
<nd-status>
 <st-btn on icon="sv1" style="margin-left:auto"></st-btn><st-btn icon="sv2" style="margin-left:6px"></st-btn><st-btn icon="sv3" style="margin-left:5px"></st-btn><st-btn on icon="sv4" style="margin-left:8px"></st-btn><st-btn icon="sv5" style="margin-left:5px"></st-btn>
 <span style="margin-left:12px;width:34px;white-space:nowrap">100%</span>
 <st-btn icon="minus2" style="margin-left:11px"></st-btn><st-slider style="margin-left:7px"></st-slider><st-btn icon="plus2" style="margin-left:6px"></st-btn><st-btn icon="move" style="margin-left:12px"></st-btn><st-btn icon="bell" style="margin-left:17px"></st-btn><st-btn icon="grip" style="margin-left:6px;width:14px"></st-btn>
</nd-status>
<nd-callout style="left:39px;top:356px;width:145px;height:66px;padding:2px 0 0 27px;font-size:17px"><span class="num">①</span> Profile
<span style="letter-spacing:0">Navigator</span></nd-callout>
<nd-callout style="left:706px;top:399px;width:188px;height:74px;padding:18px 0 0 11px;font-size:18px"><span class="num">②</span> Class Diagram</nd-callout>
<nd-callout style="left:1140px;top:407px;width:156px;height:67px;padding:14px 0 0 20px;font-size:17px"><span class="num">③</span> Inspector</nd-callout>
</nd-app>
</body></html>
